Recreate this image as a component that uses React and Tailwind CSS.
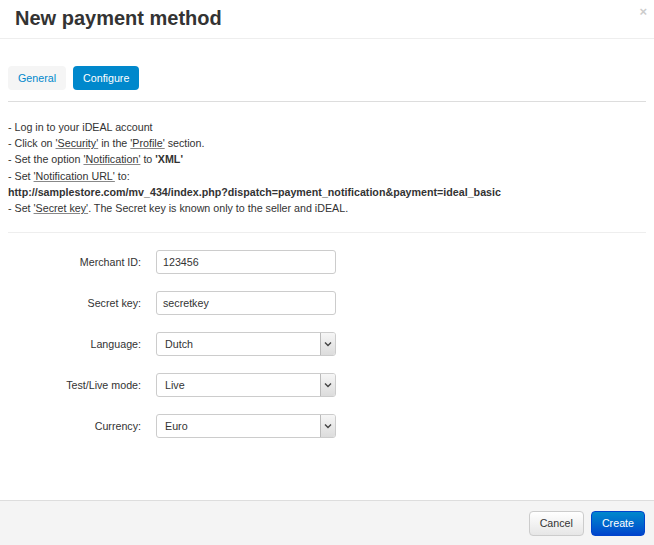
import React from 'react';

const fields = [
    { label: 'Merchant ID:', value: '123456', type: 'input' },
    { label: 'Secret key:', value: 'secretkey', type: 'input' },
    { label: 'Language:', value: 'Dutch', type: 'select' },
    { label: 'Test/Live mode:', value: 'Live', type: 'select' },
    { label: 'Currency:', value: 'Euro', type: 'select' },
];

function Field({ f }) {
    if (f.type === 'select') {
        return (
            <div className="flex w-[180px] h-[24px] border border-[#ccc] rounded-[3px] bg-white overflow-hidden">
                <div className="flex-1 flex items-center px-[8px] text-[10.7px] text-[#333]">{f.value}</div>
                <div className="w-[15px] h-full flex items-center justify-center border-l border-[#bbb] bg-gradient-to-b from-[#f6f6f6] to-[#dcdcdc]">
                    <svg width="8" height="6" viewBox="0 0 8 6">
                        <path d="M1 1.5 L4 4.5 L7 1.5" stroke="#444" strokeWidth="1.4" fill="none" />
                    </svg>
                </div>
            </div>
        );
    }
    return (
        <div className="w-[180px] h-[24px] flex items-center px-[6px] border border-[#ccc] rounded-[3px] bg-white text-[10.7px] text-[#333]">
            {f.value}
        </div>
    );
}

function App() {
    return (
        <div className="w-[654px] h-[545px] bg-white flex flex-col text-[#333]" style={{ fontFamily: '"Liberation Sans", Arial, sans-serif' }}>
            {/* Header */}
            <div className="relative h-[39px] border-b border-[#eee] px-[15px] flex items-center">
                <h3 className="text-[20px] font-bold text-[#333] leading-none pb-[3px]">New payment method</h3>
                <span className="absolute right-[7px] top-[2px] text-[13px] font-bold text-[#ccc]">×</span>
            </div>

            {/* Body */}
            <div className="flex-1 px-[8px]">
                <div className="flex gap-[7px] pt-[27px] pb-[11px] border-b border-[#ddd]">
                    <div className="h-[24px] px-[10px] flex items-center rounded-[4px] bg-[#f5f5f5] text-[10.7px] text-[#0088cc]">General</div>
                    <div className="h-[24px] px-[10px] flex items-center rounded-[4px] bg-[#0088cc] text-[10.7px] text-white">Configure</div>
                </div>

                <div className="pt-[17px] pb-[16px] border-b border-[#eee] text-[10.7px] leading-[16.2px] text-[#333]">
                    <div>- Log in to your iDEAL account</div>
                    <div>- Click on <span className="underline decoration-[#888]">'Security'</span> in the <span className="underline decoration-[#888]">'Profile'</span> section.</div>
                    <div>- Set the option <span className="underline decoration-[#888]">'Notification'</span> to <b>'XML'</b></div>
                    <div>- Set <span className="underline decoration-[#888]">'Notification URL'</span> to:</div>
                    <div className="font-bold">http://samplestore.com/mv_434/index.php?dispatch=payment_notification&amp;payment=ideal_basic</div>
                    <div>- Set <span className="underline decoration-[#888]">'Secret key'</span>. The Secret key is known only to the seller and iDEAL.</div>
                </div>

                <div className="pt-[17px] flex flex-col gap-[17px]">
                    {fields.map((f) => (
                        <div key={f.label} className="flex items-center">
                            <label className="w-[133px] text-right text-[10.7px] text-[#333]">{f.label}</label>
                            <div className="ml-[15px]">
                                <Field f={f} />
                            </div>
                        </div>
                    ))}
                </div>
            </div>

            {/* Footer */}
            <div className="h-[45px] border-t border-[#ddd] bg-[#f4f4f4] flex items-center justify-end gap-[7px] pr-[9px]">
                <button className="h-[25px] px-[10px] rounded-[4px] border border-[#ccc] bg-gradient-to-b from-white to-[#e6e6e6] text-[10.7px] text-[#333]">
                    Cancel
                </button>
                <button className="h-[25px] px-[10px] rounded-[4px] border border-[#0044cc] bg-gradient-to-b from-[#0088cc] to-[#0044cc] text-[10.7px] text-white">
                    Create
                </button>
            </div>
        </div>
    );
}

export default App;
